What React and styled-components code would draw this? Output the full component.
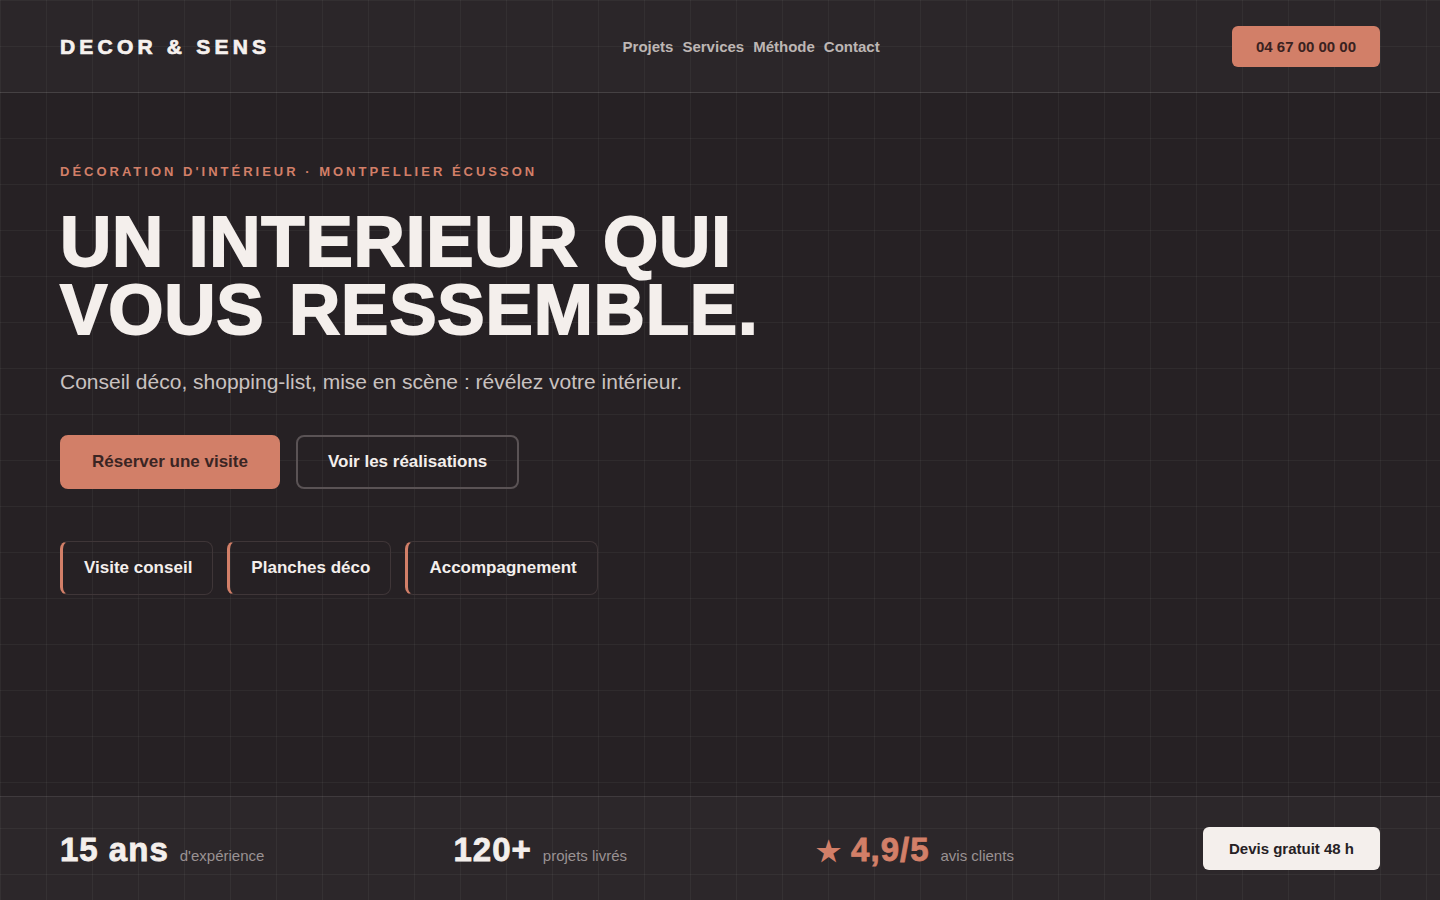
import styled, { createGlobalStyle } from 'styled-components';

const GlobalStyle = createGlobalStyle`
  * { box-sizing: border-box; }
  html, body {
    margin: 0;
    padding: 0;
  }
  body {
    font-family: "Liberation Sans", Arial, sans-serif;
    color: #f4efec;
    background-color: #262124;
    background-image:
      linear-gradient(rgba(255, 255, 255, 0.045) 1px, transparent 1px),
      linear-gradient(90deg, rgba(255, 255, 255, 0.045) 1px, transparent 1px);
    background-size: 46px 46px;
  }
`;

const Page = styled.div`
  min-height: 100vh;
  display: flex;
  flex-direction: column;
`;

const Header = styled.header`
  height: 93px;
  padding: 0 60px;
  display: flex;
  align-items: center;
  justify-content: space-between;
  background: rgba(255, 255, 255, 0.022);
  border-bottom: 1px solid rgba(255, 255, 255, 0.09);
`;

const Logo = styled.div`
  font-size: 21px;
  font-weight: 700;
  letter-spacing: 4.2px;
  color: #f6f1ee;
  -webkit-text-stroke: 0.7px #f6f1ee;
  padding-top: 2px;
`;

const Nav = styled.nav`
  display: flex;
  gap: 9px;
  a {
    font-size: 15px;
    font-weight: 700;
    color: #bdb6b4;
    text-decoration: none;
  }
`;

const PhoneButton = styled.a`
  width: 148px;
  height: 41px;
  display: flex;
  align-items: center;
  justify-content: center;
  border-radius: 6px;
  background: #d27f68;
  color: #3a2220;
  font-size: 15px;
  font-weight: 700;
  text-decoration: none;
`;

const Hero = styled.main`
  flex: 1;
  padding: 71px 60px 0;
`;

const Eyebrow = styled.p`
  margin: 0;
  font-size: 13px;
  font-weight: 700;
  letter-spacing: 3px;
  color: #d27f68;
  line-height: 16px;
`;

const Title = styled.h1`
  margin: 28px 0 0;
  font-size: 71px;
  line-height: 68px;
  font-weight: 700;
  color: #f4efec;
  -webkit-text-stroke: 1.8px #f4efec;
  letter-spacing: 0.8px;
  word-spacing: 4px;
`;

const Lead = styled.p`
  margin: 26px 0 0;
  font-size: 21px;
  line-height: 24px;
  color: #c9c2c0;
`;

const Actions = styled.div`
  margin-top: 41px;
  display: flex;
  gap: 16px;
`;

const Button = styled.a`
  height: 54px;
  padding: 0 30px;
  display: flex;
  align-items: center;
  border-radius: 8px;
  font-size: 17px;
  font-weight: 700;
  text-decoration: none;
  background: ${(p) => (p.$primary ? '#d27f68' : 'transparent')};
  color: ${(p) => (p.$primary ? '#3a2523' : '#f4efec')};
  border: 2px solid ${(p) => (p.$primary ? '#d27f68' : '#5a5355')};
`;

const Chips = styled.div`
  margin-top: 52px;
  display: flex;
  gap: 14px;
`;

const Chip = styled.div`
  height: 54px;
  padding: 0 20px 0 21px;
  display: flex;
  align-items: center;
  border: 1px solid #3f3638;
  border-left: 3px solid #d27f68;
  border-radius: 8px;
  font-size: 17px;
  font-weight: 700;
  color: #f4efec;
`;

const Stats = styled.footer`
  height: 104px;
  padding: 0 60px;
  display: flex;
  align-items: center;
  justify-content: space-between;
  background: rgba(255, 255, 255, 0.03);
  border-top: 1px solid rgba(255, 255, 255, 0.09);
`;

const Stat = styled.div`
  display: flex;
  align-items: baseline;
  gap: 11px;
  padding-top: 3px;
`;

const StatValue = styled.span`
  font-size: 33px;
  font-weight: 700;
  letter-spacing: 1px;
  color: ${(p) => (p.$accent ? '#d27f68' : '#f4efec')};
  -webkit-text-stroke: 0.8px currentColor;
`;

const StatLabel = styled.span`
  font-size: 15px;
  color: #9a9293;
`;

const Star = styled.span`
  font-size: 28px;
  margin-right: 9px;
  -webkit-text-stroke: 0;
`;

const QuoteButton = styled.a`
  width: 177px;
  height: 43px;
  display: flex;
  align-items: center;
  justify-content: center;
  border-radius: 6px;
  background: #f4efec;
  color: #262124;
  font-size: 15px;
  font-weight: 700;
  text-decoration: none;
`;

export default function App() {
  return (
    <>
      <GlobalStyle />
      <Page>
        <Header>
          <Logo>DECOR &amp; SENS</Logo>
          <Nav>
            <a href="#projets">Projets</a>
            <a href="#services">Services</a>
            <a href="#methode">Méthode</a>
            <a href="#contact">Contact</a>
          </Nav>
          <PhoneButton href="#tel">04 67 00 00 00</PhoneButton>
        </Header>
        <Hero>
          <Eyebrow>DÉCORATION D'INTÉRIEUR · MONTPELLIER ÉCUSSON</Eyebrow>
          <Title>
            UN INTERIEUR QUI
            <br />
            VOUS RESSEMBLE.
          </Title>
          <Lead>Conseil déco, shopping-list, mise en scène : révélez votre intérieur.</Lead>
          <Actions>
            <Button $primary href="#visite">Réserver une visite</Button>
            <Button href="#realisations">Voir les réalisations</Button>
          </Actions>
          <Chips>
            <Chip>Visite conseil</Chip>
            <Chip>Planches déco</Chip>
            <Chip>Accompagnement</Chip>
          </Chips>
        </Hero>
        <Stats>
          <Stat>
            <StatValue>15 ans</StatValue>
            <StatLabel>d'expérience</StatLabel>
          </Stat>
          <Stat>
            <StatValue>120+</StatValue>
            <StatLabel>projets livrés</StatLabel>
          </Stat>
          <Stat>
            <StatValue $accent>
              <Star>★</Star>4,9/5
            </StatValue>
            <StatLabel>avis clients</StatLabel>
          </Stat>
          <QuoteButton href="#devis">Devis gratuit 48 h</QuoteButton>
        </Stats>
      </Page>
    </>
  );
}
